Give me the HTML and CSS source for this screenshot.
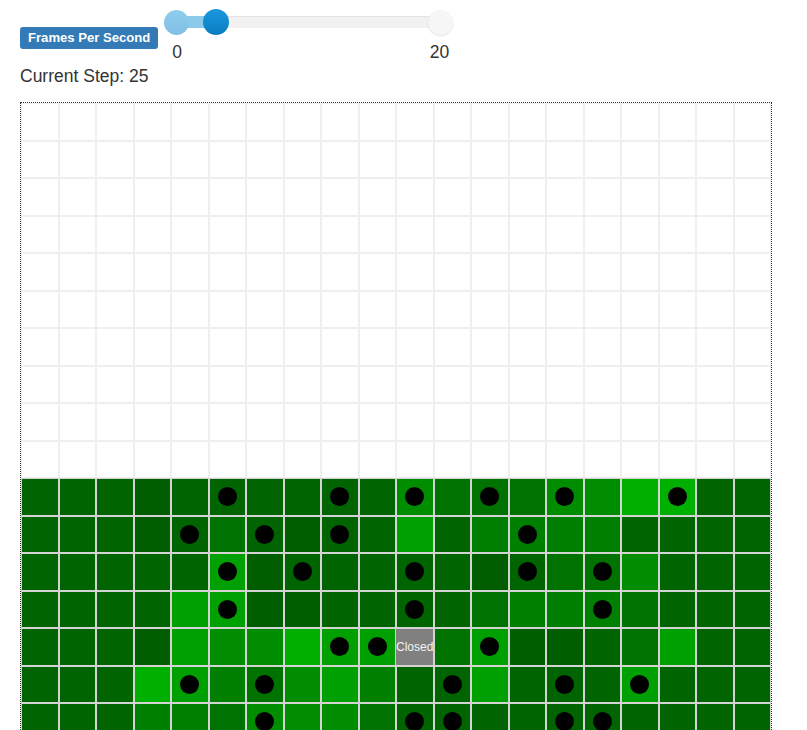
FILE: index.html
```html
<!DOCTYPE html>
<html lang="en">
<head>
<meta charset="utf-8">
<title>Fire simulation</title>
<link rel="stylesheet" href="styles.css">
</head>
<body>
<div class="controls">
  <span class="badge">Frames Per Second</span>
  <div class="slider">
    <div class="track">
      <div class="fill" style="width: 15%"></div>
      <span class="knob knob-min"></span>
      <span class="knob knob-max"></span>
      <span class="knob knob-value" style="left: 15%"></span>
    </div>
    <div class="ticks"><span>0</span><span>20</span></div>
  </div>
</div>
<div class="step">Current Step: 25</div>
<div class="board">
  <div class="grid" id="grid"></div>
</div>
<script src="app.js"></script>
</body>
</html>
```

FILE: styles.css
```css
html, body {
  margin: 0;
  padding: 0;
  background: #fff;
}
body {
  padding: 0 20px;
  font-family: "Liberation Sans", Arial, Helvetica, sans-serif;
  font-size: 17.5px;
  line-height: 25px;
  color: #333;
}
.controls {
  display: flex;
  align-items: flex-start;
}
.badge {
  margin-top: 27px;
  display: inline-block;
  background: #337ab7;
  color: #fff;
  font-weight: bold;
  font-size: 13.1px;
  line-height: 1;
  padding: 4px 8px 4.5px;
  border-radius: 3px;
  white-space: nowrap;
}
.slider {
  width: 290px;
  margin-left: 5px;
  padding-top: 16px;
}
.track {
  position: relative;
  height: 12px;
  margin: 0 13px;
  background: #f1f1f1;
  border-radius: 6px;
  box-shadow: inset 0 1px 1px rgba(0,0,0,0.06);
}
.fill {
  position: absolute;
  left: 0;
  top: 0;
  bottom: 0;
  background: #8ccaea;
}
.knob {
  position: absolute;
  top: -6.5px;
  width: 25px;
  height: 25px;
  margin-left: -12.5px;
  border-radius: 50%;
}
.knob-min {
  left: 0;
  background: linear-gradient(#8fcdee, #7fbfe3);
}
.knob-max {
  left: 100%;
  background: #f6f6f6;
  box-shadow: 0 1px 2px rgba(0,0,0,0.12);
}
.knob-value {
  top: -7px;
  width: 26px;
  height: 26px;
  margin-left: -13px;
  background: linear-gradient(#1c98dc, #0a7cc2);
}
.ticks {
  display: flex;
  justify-content: space-between;
  margin-top: 12px;
  padding: 0 4px 0 9px;
}
.step {
  margin-top: -1px;
}
.board {
  margin-top: 13px;
  width: 750px;
  border: 1px dotted #333;
}
.grid {
  display: grid;
  grid-template-columns: repeat(20, 37.5px);
  grid-auto-rows: 37.5px;
}
.cell {
  box-sizing: border-box;
  border: 1px solid #d4d4d4;
  display: flex;
  align-items: center;
  justify-content: center;
  overflow: hidden;
}
.cell.empty { background: #fff; border-color: #efefef; }
.cell.sA { background: #005e00; }
.cell.sB { background: #006400; }
.cell.sC { background: #007200; }
.cell.sD { background: #008000; }
.cell.sE { background: #008e00; }
.cell.sF { background: #00a000; }
.cell.sG { background: #00b000; }
.cell.closed {
  background: #808080;
  color: #f2f2f2;
  font-size: 12px;
  line-height: 1;
  justify-content: flex-start;
  padding-left: 0;
  white-space: nowrap;
  border-left: none;
}
.dot {
  width: 19px;
  height: 19px;
  border-radius: 50%;
  background: #000;
  flex: none;
}
```

FILE: app.js
```js
(function () {
  var rows = [
    "B B B A B B* B B B* B E* C C* C E* E G G* B B",
    "B B B A B* C B* A B* B F B D D* D D B B B B",
    "B B B B B F* A B* B B B* B A B* C C* E B B B",
    "B B B B F F* A A B B B* B C D D D* C B B B",
    "B B B A F E E G F* F* X C F* A A B C F B B",
    "B B B G F* D C* E F D B B* F B B* B F* B B B",
    "B B B D D C E* E E C B* B* B B B* B* B B B B",
    "B B B B B C B B B B B B B B B B B B B B",
    "B B B B B B B B B B B B B B B B B B B B",
    "B B B B B B B B B B B B B B B B B B B B"
  ];
  var grid = document.getElementById("grid");
  var html = "";
  var r, c;
  for (r = 0; r < 10; r++) {
    for (c = 0; c < 20; c++) html += '<div class="cell empty"></div>';
  }
  for (r = 0; r < rows.length; r++) {
    var toks = rows[r].split(" ");
    for (c = 0; c < toks.length; c++) {
      var t = toks[c];
      if (t === "X") {
        html += '<div class="cell closed">Closed</div>';
        continue;
      }
      var dot = t.indexOf("*") >= 0;
      html += '<div class="cell s' + t.charAt(0) + '">' + (dot ? '<span class="dot"></span>' : '') + '</div>';
    }
  }
  grid.innerHTML = html;
})();
```
